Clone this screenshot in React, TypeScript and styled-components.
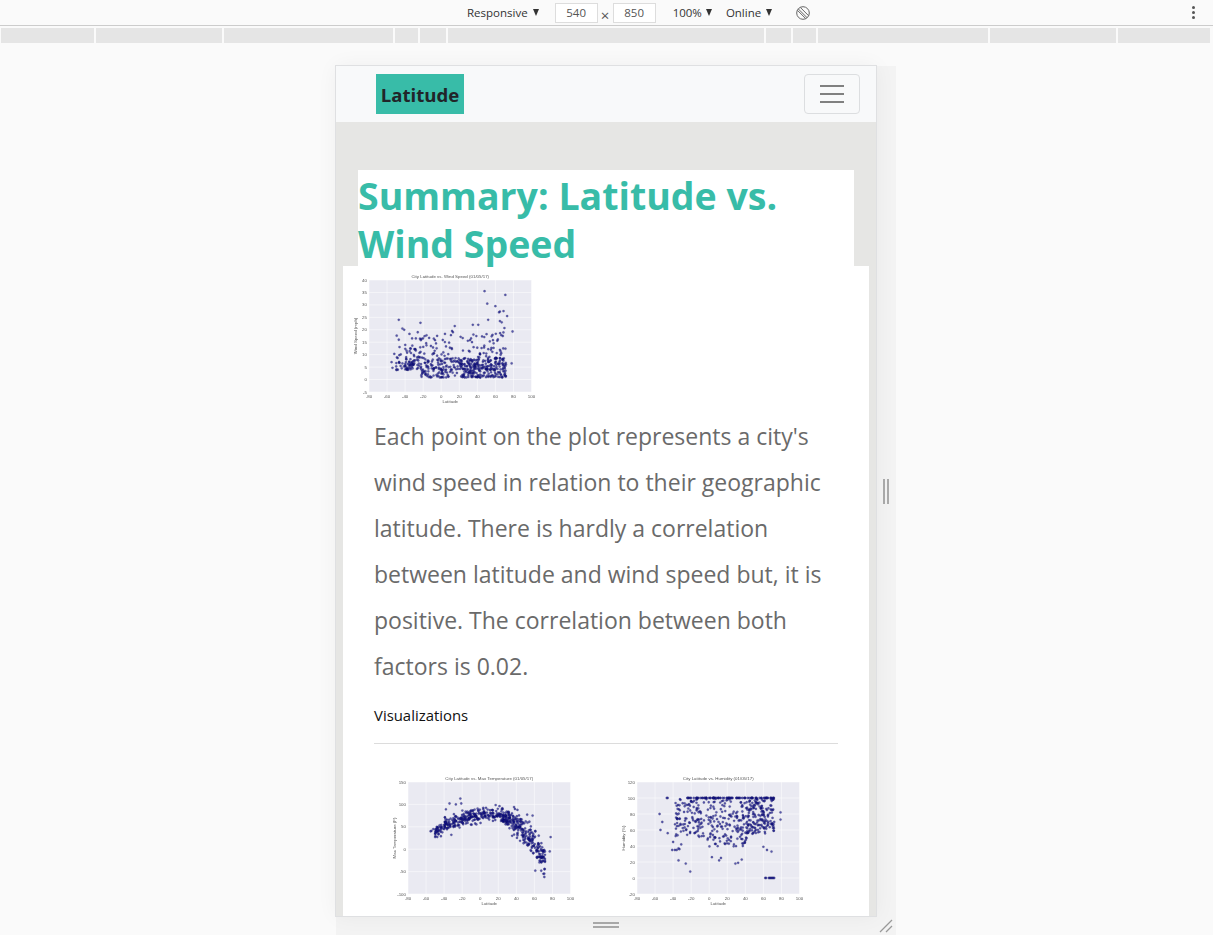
import React from 'react';
import styled, { createGlobalStyle } from 'styled-components';

const GlobalStyle = createGlobalStyle`
  html, body {
    margin: 0;
    height: 935px;
    overflow: hidden;
    background: #fafafa;
    font-family: "Open Sans", "Noto Sans", sans-serif;
  }
  * { box-sizing: border-box; }
`;

// media query bar: widths of the grey blocks between dividers
const MEDIA_SEGMENTS = [93, 126, 169, 23, 26, 316, 25, 23, 170, 126, 92];

interface Point { x: number; y: number; }

interface ChartDef {
  title: string;
  yLabel: string;
  yMin: number;
  yMax: number;
  yStep: number;
  points: Point[];
  plotLeft: number;
}

const rng = (seed: number) => () => {
  seed |= 0;
  seed = (seed + 0x6d2b79f5) | 0;
  let t = Math.imul(seed ^ (seed >>> 15), 1 | seed);
  t = (t + Math.imul(t ^ (t >>> 7), 61 | t)) ^ t;
  return ((t ^ (t >>> 14)) >>> 0) / 4294967296;
};

const sampleLat = (r: () => number) => {
  const u = r();
  if (u < 0.05) return -50 + r() * 12;
  if (u < 0.3) return -40 + r() * 35;
  if (u < 0.5) return -5 + r() * 30;
  return 25 + r() * 47;
};

const gauss = (r: () => number) => (r() + r() + r() + r() - 2) * 1.7;

const windPoints = (): Point[] => {
  const r = rng(11);
  const pts: Point[] = [
    { x: 48, y: 35.5 }, { x: 71, y: 34 }, { x: 51, y: 30.5 }, { x: 60, y: 29.5 },
    { x: 64, y: 27 }, { x: 65, y: 27.3 }, { x: 69, y: 27.5 }, { x: 73, y: 25.5 },
    { x: -47, y: 24 }, { x: -23, y: 22.8 }, { x: 52, y: 24 }, { x: 65, y: 23.5 },
    { x: 67, y: 23 }, { x: 70, y: 20.7 }, { x: 15, y: 21.5 }, { x: 35, y: 22 },
    { x: 41, y: 22 }, { x: -43, y: 20.5 }, { x: -41, y: 20 }, { x: 79, y: 19.3 },
    { x: -55, y: 7 }, { x: -54, y: 4.7 }, { x: -52, y: 10.3 }, { x: 78, y: 6.5 },
    { x: 12, y: 19.5 }, { x: 13, y: 19 }, { x: -26, y: 19 }, { x: -47, y: 16 },
  ];
  for (let i = 0; i < 560; i++) {
    const x = sampleLat(r);
    const band = r();
    let y = band < 0.6 ? 0.8 + Math.pow(r(), 1.4) * 8 : 4 + Math.pow(r(), 1.6) * 15;
    if (x < -22 && y < 3.5) y += 3 + r() * 7;
    pts.push({ x, y });
  }
  return pts;
};

const tempPoints = (): Point[] => {
  const r = rng(23);
  const pts: Point[] = [
    { x: -55, y: 40 }, { x: -54, y: 41 }, { x: -52, y: 45 }, { x: -32, y: 32 },
    { x: -34, y: 102 }, { x: -22, y: 113 }, { x: -21, y: 102 }, { x: -27, y: 100 },
    { x: 52, y: 77 }, { x: 58, y: 75 }, { x: 78, y: 27 }, { x: 77, y: -5 },
    { x: 71, y: -62 }, { x: 70, y: -55 }, { x: 61, y: -48 }, { x: -38, y: 89 },
  ];
  for (let i = 0; i < 560; i++) {
    const x = sampleLat(r);
    const base = x < 10
      ? 76 - (x - 5) * (x - 5) * 0.012
      : 76 - (x - 15) * (x - 15) * 0.032;
    const spread = x > 35 ? 15 : 8;
    pts.push({ x, y: base + gauss(r) * spread });
  }
  return pts;
};

const humidityPoints = (): Point[] => {
  const r = rng(37);
  const pts: Point[] = [
    { x: -55, y: 80 }, { x: -54, y: 60 }, { x: -52, y: 70 }, { x: -47, y: 100 },
    { x: -46, y: 100 }, { x: -46, y: 56 }, { x: -40, y: 45 }, { x: -41, y: 35 },
    { x: -38, y: 35 }, { x: -36, y: 35 }, { x: -34, y: 37 }, { x: -33, y: 36 },
    { x: -31, y: 42 }, { x: -34, y: 22 }, { x: -26, y: 18 }, { x: -21, y: 8 },
    { x: 3, y: 26 }, { x: 11, y: 22 }, { x: 13, y: 25 }, { x: 29, y: 18 },
    { x: 32, y: 19 }, { x: 36, y: 23 }, { x: 62, y: 0 }, { x: 63, y: 0 },
    { x: 66, y: 0 }, { x: 67, y: 0 }, { x: 68, y: 0 }, { x: 69, y: 0 },
    { x: 70, y: 0 }, { x: 71, y: 0 }, { x: 72, y: 0 }, { x: 60, y: 39 },
    { x: 64, y: 35 }, { x: 69, y: 33 }, { x: 79, y: 82 }, { x: 79, y: 73 },
  ];
  for (let i = 0; i < 90; i++) {
    pts.push({ x: -25 + r() * 97, y: 100 });
  }
  for (let i = 0; i < 430; i++) {
    const x = r() < 0.22 ? 35 + r() * 37 : -38 + r() * 110;
    const depth = x > 42 ? 44 : x < -5 ? 48 : 60;
    const y = 99 - r() * depth;
    pts.push({ x, y });
  }
  return pts;
};

const charts: ChartDef[] = [
  { title: 'City Latitude vs. Max Temperature (01/05/17)', yLabel: 'Max Temperature (F)', yMin: -100, yMax: 150, yStep: 50, points: tempPoints(), plotLeft: 17 },
  { title: 'City Latitude vs. Humidity (01/05/17)', yLabel: 'Humidity (%)', yMin: -20, yMax: 120, yStep: 20, points: humidityPoints(), plotLeft: 17 },
];

const windChart: ChartDef = {
  title: 'City Latitude vs. Wind Speed (01/05/17)',
  yLabel: 'Wind Speed (mph)',
  yMin: -5,
  yMax: 40,
  yStep: 5,
  points: windPoints(),
  plotLeft: 15,
};

const Scatter: React.FC<{ chart: ChartDef }> = ({ chart }) => {
  const left = chart.plotLeft;
  const top = 9;
  const w = 162.5;
  const h = 112;
  const sx = (v: number) => left + ((v + 80) / 180) * w;
  const sy = (v: number) => top + ((chart.yMax - v) / (chart.yMax - chart.yMin)) * h;
  const xTicks = Array.from({ length: 10 }, (_, i) => -80 + i * 20);
  const yTicks: number[] = [];
  for (let v = chart.yMin; v <= chart.yMax; v += chart.yStep) yTicks.push(v);

  return (
    <ChartSvg width="190" height="135" viewBox="0 0 190 135">
      <rect x={left} y={top} width={w} height={h} fill="#eaeaf2" />
      {xTicks.map((t) => (
        <line key={t} x1={sx(t)} x2={sx(t)} y1={top} y2={top + h} stroke="#fff" strokeWidth="0.5" />
      ))}
      {yTicks.map((t) => (
        <line key={t} x1={left} x2={left + w} y1={sy(t)} y2={sy(t)} stroke="#fff" strokeWidth="0.5" />
      ))}
      {chart.points.map((p, i) => (
        <circle key={i} cx={sx(p.x)} cy={sy(p.y)} r="1.15" fill="#14148c" fillOpacity="0.68" stroke="#0a0a3c" strokeOpacity="0.5" strokeWidth="0.3" />
      ))}
      <g fill="#555" fontSize="4.4" fontFamily="Liberation Sans, sans-serif">
        <text x={left + w / 2} y={top - 2.5} textAnchor="middle">{chart.title}</text>
        {xTicks.map((t) => (
          <text key={t} x={sx(t)} y={top + h + 5.5} textAnchor="middle">{t}</text>
        ))}
        {yTicks.map((t) => (
          <text key={t} x={left - 2} y={sy(t) + 1.5} textAnchor="end">{t}</text>
        ))}
        <text x={left + w / 2} y={top + h + 10.5} textAnchor="middle">Latitude</text>
        <text transform={`translate(${left - 12} ${top + h / 2}) rotate(-90)`} textAnchor="middle">{chart.yLabel}</text>
      </g>
    </ChartSvg>
  );
};

const App: React.FC = () => (
  <>
    <GlobalStyle />
    <Toolbar>
      <ToolText>Responsive</ToolText>
      <Caret $gap={5} />
      <SizeInput $left={16}>540</SizeInput>
      <Times>×</Times>
      <SizeInput>850</SizeInput>
      <ToolText $left={17}>100%</ToolText>
      <Caret $gap={4} />
      <ToolText $left={14}>Online</ToolText>
      <Caret $gap={5} />
      <RotateIcon />
      <Kebab>
        <i />
        <i />
        <i />
      </Kebab>
    </Toolbar>
    <MediaBar>
      {MEDIA_SEGMENTS.map((w, i) => (
        <MediaSegment key={i} $width={w} />
      ))}
    </MediaBar>
    <Stage>
      <Spacer />
      <Device>
        <Navbar>
          <Brand>Latitude</Brand>
          <Toggler>
            <svg width="24" height="18" viewBox="0 0 24 18">
              <path d="M0 2h24M0 10h24M0 18h24" stroke="#808080" strokeWidth="2" transform="translate(0 -1)" />
            </svg>
          </Toggler>
        </Navbar>
        <Heading>Summary: Latitude vs. Wind Speed</Heading>
        <Content>
          <Scatter chart={windChart} />
          <Lead>
            Each point on the plot represents a city's wind speed in relation to their geographic
            latitude. There is hardly a correlation between latitude and wind speed but, it is
            positive. The correlation between both factors is 0.02.
          </Lead>
          <SubTitle>Visualizations</SubTitle>
          <Rule />
          <ChartRow>
            {charts.map((c) => (
              <Scatter key={c.title} chart={c} />
            ))}
          </ChartRow>
        </Content>
      </Device>
      <SideHandle>
        <i />
        <i />
      </SideHandle>
      <Spacer />
      <BottomHandle>
        <i />
        <i />
      </BottomHandle>
      <Corner>
        <svg width="14" height="14" viewBox="0 0 14 14">
          <path d="M1 13L13 1M7 13L13 7" stroke="#999" strokeWidth="1.3" />
        </svg>
      </Corner>
    </Stage>
  </>
);

const Toolbar = styled.div`
  display: flex;
  align-items: center;
  height: 26px;
  padding-left: 467px;
  border-bottom: 1px solid #ccc;
  background: #fafafa;
  color: #333;
  font-size: 11.5px;
`;

const ToolText = styled.span<{ $left?: number }>`
  margin-left: ${({ $left }) => $left ?? 0}px;
`;

const Caret = styled.span<{ $gap: number }>`
  width: 0;
  height: 0;
  margin-left: ${({ $gap }) => $gap}px;
  border-left: 3.5px solid transparent;
  border-right: 3.5px solid transparent;
  border-top: 7px solid #333;
`;

const SizeInput = styled.span<{ $left?: number }>`
  display: flex;
  align-items: center;
  justify-content: center;
  width: 43px;
  height: 20px;
  margin-left: ${({ $left }) => $left ?? 0}px;
  border: 1px solid #ddd;
  background: #fff;
  color: #555;
`;

const Times = styled.span`
  width: 15px;
  text-align: center;
  font-size: 15px;
  padding-top: 4px;
  color: #555;
`;

const RotateIcon = () => (
  <RotateSvg width="16" height="16" viewBox="0 0 16 16">
    <g fill="none" stroke="#666" strokeWidth="1">
      <circle cx="8" cy="8" r="6.3" />
      <path d="M3.2 3.8L12.2 12.8M5.2 2.3L13.7 10.8M2.3 5.2L10.8 13.7" />
    </g>
  </RotateSvg>
);

const RotateSvg = styled.svg`
  margin-left: 23px;
`;

const Kebab = styled.div`
  display: flex;
  flex-direction: column;
  gap: 2px;
  margin-left: 381px;

  i {
    width: 3px;
    height: 3px;
    border-radius: 50%;
    background: #555;
  }
`;

const MediaBar = styled.div`
  display: flex;
  gap: 2px;
  height: 15px;
  margin: 2px 0 0 1px;
`;

const MediaSegment = styled.div<{ $width: number }>`
  width: ${({ $width }) => $width}px;
  background: #e5e5e5;
`;

const Stage = styled.div`
  display: grid;
  grid-template-columns: 20px 540px 20px;
  grid-template-rows: 850px 20px;
  justify-content: center;
  width: 1212px;
  margin-top: 23px;
`;

const Spacer = styled.div``;

const Device = styled.div`
  height: 850px;
  overflow: hidden;
  background: #e6e6e4;
  box-shadow: 0 0 0 1px #dfe0e2, 0 0 20px rgba(0, 0, 0, 0.05);
  z-index: 1;
`;

const Navbar = styled.nav`
  display: flex;
  align-items: center;
  justify-content: space-between;
  height: 56px;
  padding: 0 16px 0 40px;
  background: #f8f9fa;
`;

const Brand = styled.div`
  display: flex;
  align-items: center;
  justify-content: center;
  width: 88px;
  height: 40px;
  background: #38bca8;
  color: #212529;
  font-size: 18.6px;
  font-weight: 700;
`;

const Toggler = styled.div`
  display: flex;
  align-items: center;
  justify-content: center;
  width: 56px;
  height: 40px;
  border: 1px solid #dcdee0;
  border-radius: 4px;
`;

const Heading = styled.h1`
  height: 96px;
  margin: 48px 22px 0;
  padding-top: 2px;
  background: #fff;
  color: #38bca8;
  font-size: 37.5px;
  font-weight: 700;
  line-height: 48px;
`;

const Content = styled.main`
  margin: 0 7px;
  padding: 5px 0 0 11px;
  height: 650px;
  background: #fff;
`;

const ChartSvg = styled.svg`
  display: block;
  filter: blur(0.45px);
`;

const Lead = styled.p`
  margin: 7px 31px 0 20px;
  color: #6a6a6a;
  font-size: 23px;
  font-weight: 400;
  line-height: 46px;
`;

const SubTitle = styled.div`
  margin: 14px 0 0 20px;
  color: #111;
  font-size: 14.9px;
  line-height: 24px;
`;

const Rule = styled.hr`
  margin: 16px 31px 0 20px;
  border: 0;
  border-top: 1px solid #dcdcdc;
`;

const ChartRow = styled.div`
  display: flex;
  gap: 39px;
  margin: 29px 0 0 37px;
`;

const SideHandle = styled.div`
  display: flex;
  align-items: center;
  justify-content: center;
  gap: 2px;
  background: #f3f3f3;

  i {
    width: 2px;
    height: 25px;
    background: #aaa;
  }
`;

const BottomHandle = styled.div`
  display: flex;
  flex-direction: column;
  align-items: center;
  justify-content: center;
  gap: 2px;
  background: #f3f3f3;
  padding-bottom: 2px;

  i {
    width: 26px;
    height: 2px;
    background: #aaa;
  }
`;

const Corner = styled.div`
  display: flex;
  align-items: center;
  justify-content: center;
  background: #f3f3f3;
`;

export default App;
